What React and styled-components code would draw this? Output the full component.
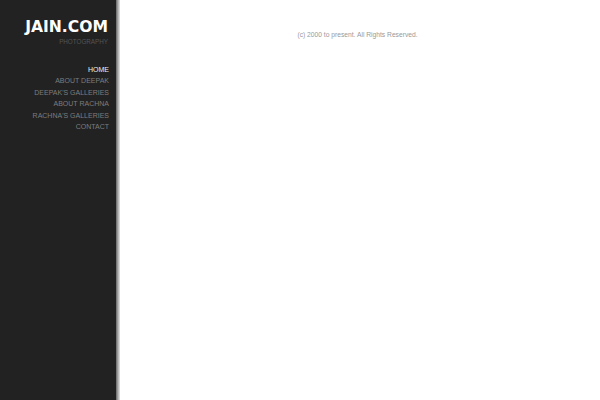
import React from 'react'
import styled, { createGlobalStyle } from 'styled-components'

const Global = createGlobalStyle`
  html, body, #root { margin: 0; padding: 0; height: 100%; }
  body { background: #fff; font-family: "Liberation Sans", Arial, sans-serif; }
`

const links = [
  'HOME',
  'ABOUT DEEPAK',
  "DEEPAK'S GALLERIES",
  'ABOUT RACHNA',
  "RACHNA'S GALLERIES",
  'CONTACT',
]

export default function App() {
  return (
    <>
      <Global />
      <Page>
        <Sidebar>
          <Brand>
            <Title>JAIN.COM</Title>
            <Tagline>PHOTOGRAPHY</Tagline>
          </Brand>
          <Menu>
            {links.map((l, i) => (
              <Item key={l} active={i === 0}>
                <a href="/">{l}</a>
              </Item>
            ))}
          </Menu>
        </Sidebar>
        <Shadow />
        <Main>
          <Copy>(c) 2000 to present. All Rights Reserved.</Copy>
        </Main>
      </Page>
    </>
  )
}

const Page = styled.div`
  display: flex;
  height: 100vh;
`

const Sidebar = styled.aside`
  width: 116px;
  flex-shrink: 0;
  background: #222;
  text-align: right;
  box-sizing: border-box;
  padding: 17px 7px 0 0;
`

const Shadow = styled.div`
  width: 4px;
  flex-shrink: 0;
  background: linear-gradient(90deg, #666 0%, #aaa 50%, #e6e6e6 100%);
`

const Brand = styled.div`
  padding-right: 1px;
`

const Title = styled.h1`
  margin: 0;
  font-family: "DejaVu Sans", sans-serif;
  font-weight: 700;
  font-size: 15.6px;
  line-height: 20px;
  color: #fff;
`

const Tagline = styled.div`
  font-size: 6.3px;
  line-height: 10px;
  color: #555;
`

const Menu = styled.ul`
  list-style: none;
  margin: 17px 0 0;
  padding: 0;
`

const Item = styled.li`
  font-size: 7px;
  line-height: 11.4px;
  a {
    color: ${p => (p.active ? '#eee' : '#7d7d7d')};
    text-decoration: none;
  }
`

const Main = styled.main`
  flex: 1;
  text-align: center;
  padding: 30px 5px 0 0;
`

const Copy = styled.p`
  margin: 0;
  font-size: 6.7px;
  line-height: 9px;
  color: #999;
`
